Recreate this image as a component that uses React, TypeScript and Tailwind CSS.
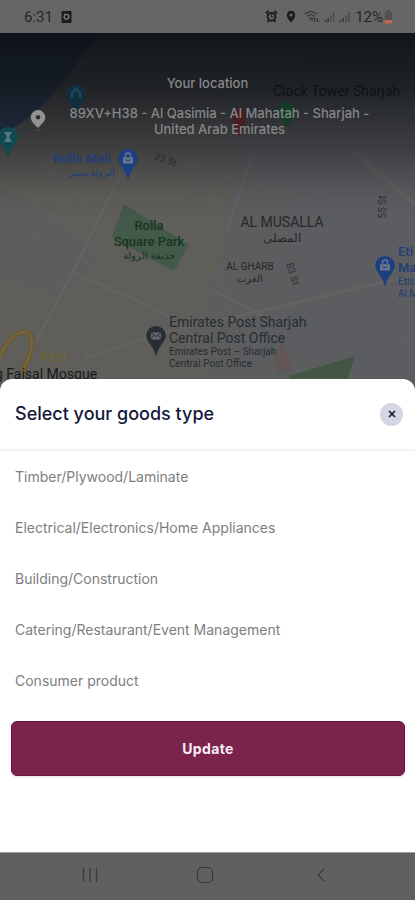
import type { ReactNode } from "react";

const GOODS = [
  "Timber/Plywood/Laminate",
  "Electrical/Electronics/Home Appliances",
  "Building/Construction",
  "Catering/Restaurant/Event Management",
  "Consumer product",
];

function StatusBar() {
  return (
    <header className="flex h-[33px] items-center justify-between bg-[#666666] pr-[22px] pl-6 font-['Roboto',sans-serif] text-[#262626]">
      <div className="flex items-center gap-2">
        <span className="text-[15px] leading-5">6:31</span>
        <svg width="11" height="12" viewBox="0 0 11 12" aria-hidden="true">
          <rect x="0.5" width="10" height="12" rx="1" fill="#1c1c1c" />
          <circle cx="5.5" cy="5.8" r="2.4" fill="none" stroke="#808080" strokeWidth="1.3" />
          <path d="M3.2 3.2h1.6" stroke="#808080" />
        </svg>
      </div>
      <div className="flex items-center gap-1">
        <svg width="13" height="13" viewBox="0 0 13 13" aria-hidden="true">
          <path d="M1 3.5L3.6 1M12 3.5L9.4 1M2.6 11.8l1.2-1.4M10.4 11.8L9.2 10.4" stroke="#1f1f1f" strokeWidth="2" />
          <circle cx="6.5" cy="6.8" r="3.9" fill="none" stroke="#1f1f1f" strokeWidth="2" />
          <path d="M6.5 4.5v2.5h2" fill="none" stroke="#1f1f1f" />
        </svg>
        <svg className="mx-1" width="10" height="13" viewBox="0 0 10 13" aria-hidden="true">
          <path
            fillRule="evenodd"
            fill="#1c1c1c"
            d="M5 .8A4.2 4.2 0 0 0 .8 5c0 3 4.2 7.5 4.2 7.5S9.2 8 9.2 5A4.2 4.2 0 0 0 5 .8zm0 2.600a1.700 1.700 0 1 1 0 3.400 1.700 1.700 0 0 1 0-3.400z"
          />
        </svg>
        <svg width="16" height="13" viewBox="0 0 16 13" aria-hidden="true">
          <g fill="none" stroke="#353535" strokeWidth="1.2">
            <path d="M1 4.2Q7 -.8 13 4.2M3 6.5Q7 3 11 6.5M5 8.7Q7 7 9 8.7" />
            <path d="M5.5 8.5L9 11.5M9 9.5l1.5-1.5L12 9.5M10.5 12V8.2M13.5 8v3.8M12 10.5l1.5 1.5L15 10.5" strokeWidth="1" />
          </g>
        </svg>
        <svg width="11" height="13" viewBox="0 0 11 13" aria-hidden="true">
          <path d="M1.5 12V10M4.2 12V8" stroke="#333" strokeWidth="1.5" />
          <path d="M7 12V5M9.7 12V2" stroke="#4a4a4a" strokeWidth="1.4" />
        </svg>
        <svg width="12" height="13" viewBox="0 0 12 13" aria-hidden="true">
          <path d="M1.5 12V10M4.2 12V8" stroke="#333" strokeWidth="1.5" />
          <path d="M7 12V5M10 12V2" stroke="#4a4a4a" strokeWidth="1.6" />
        </svg>
        <div className="flex items-center gap-px">
          <span className="text-[15px] leading-5">12%</span>
          <svg width="9" height="14" viewBox="0 0 9 14" aria-hidden="true">
            <path d="M3 0h3v1.5h2V10H.8V1.5H3z" fill="#505050" />
            <path d="M.8 10H8V13.5H.8z" fill="#c0674f" />
          </svg>
        </div>
      </div>
    </header>
  );
}

function MapPin({ color, children }: { color: string; children?: ReactNode }) {
  return (
    <svg width="22" height="32" viewBox="0 0 22 32" aria-hidden="true">
      <path
        d="M11 1A9.8 9.8 0 0 0 1.2 10.8C1.2 16.5 7.5 20 9.8 28q.3 2.5 1.2 2.5t1.2-2.5c2.3-8 8.6-11.5 8.6-17.2A9.8 9.8 0 0 0 11 1z"
        fill={color}
      />
      {children}
    </svg>
  );
}

function Bag() {
  return (
    <g>
      <path d="M6 9.2h10v6.3H6z" fill="#66758f" />
      <path d="M8.5 9V7.5a2.5 2.5 0 0 1 5 0V9" fill="none" stroke="#66758f" strokeWidth="1.5" />
      <path d="M8.8 11.5q2.2 2.8 4.4 0" fill="none" stroke="#223f78" />
    </g>
  );
}

function MapDrawing() {
  return (
    <svg
      className="absolute inset-0 size-full"
      viewBox="0 0 415 360"
      preserveAspectRatio="xMidYMin slice"
      aria-hidden="true"
    >
      <defs>
        <linearGradient id="land" x1="0" x2="1">
          <stop offset="0" stopColor="#5f5e5a" />
          <stop offset="0.45" stopColor="#5f5e5a" />
          <stop offset="0.6" stopColor="#5c5d5f" />
          <stop offset="1" stopColor="#5b5d60" />
        </linearGradient>
        <linearGradient id="shade" x1="0" x2="0" y1="0" y2="1">
          <stop offset="0" stopColor="#0d1117" stopOpacity="0.94" />
          <stop offset="0.15" stopColor="#13161b" stopOpacity="0.84" />
          <stop offset="0.32" stopColor="#1d1f23" stopOpacity="0.5" />
          <stop offset="0.46" stopColor="#2b2c2f" stopOpacity="0.08" />
          <stop offset="0.52" stopColor="#2b2c2f" stopOpacity="0" />
        </linearGradient>
      </defs>
      <rect width="415" height="360" fill="url(#land)" />
      <path d="M0 0H100L60 52Q38 82 0 103z" fill="#1f3858" />
      <path d="M0 155Q50 180 100 225L60 265 0 240z" fill="#595c61" opacity="0.5" />
      <path d="M207 145l25 10-18 85-7 0z" fill="#625f54" opacity="0.5" />
      <g fill="none" stroke="#636362" strokeWidth="3">
        <path d="M128 125L75 235 35 310" />
        <path d="M75 240l85 38 40 30" />
        <path d="M85 325l60-20 265-62" />
        <path d="M258 108L225 200" strokeWidth="2" />
        <path d="M350 115L415 172" strokeWidth="4" />
        <path d="M215 258l48 25" />
      </g>
      <g fill="none" stroke="#626363" strokeWidth="1">
        <path d="M128 60L180 130 320 170M0 180l120 70M335 165v65l50 4V165zM250 205l80 10M10 225l60-60M70 300l100-35M180 250l25 90M310 258l36 90M415 290l-45 70M0 270L85 245" />
        <path d="M40 130l80 70M20 155l80 70M200 180l40 130M350 250l65 70M85 305v45M130 285v55" />
      </g>
      <path d="M124 171l65 41-15 26q-30-14-62-35z" fill="#435949" />
      <path d="M289 343l66-20-12 37h-54z" fill="#435646" />
      <path d="M283 311l10 25-15 4-5-20z" fill="#645451" opacity="0.7" />
      <path d="M0 325C8 300 30 290 32 308c1 14-8 23-10 34" fill="none" stroke="#6b5a2f" strokeWidth="5" />
      <path d="M0 325C8 300 30 290 32 308c1 14-8 23-10 34" fill="none" stroke="#746740" strokeWidth="2" />
      <rect width="415" height="360" fill="url(#shade)" />
      <path d="M287 68q-9 3-9 11l9 15 9-15q0-8-9-11z" fill="#123d24" />
      <path d="M239 74q-9 5-7 14l7 16 7-16q1-9-7-14z" fill="#481f21" />
    </svg>
  );
}

function MapView() {
  return (
    <section aria-label="Map" className="relative -mb-3 h-[358px] overflow-hidden font-['Roboto',sans-serif]">
      <MapDrawing />

      <div className="absolute top-[51px] left-[65px]">
        <MapPin color="#112f40">
          <path d="M7 14V9l4-4 4 4v5" fill="none" stroke="#244856" strokeWidth="2" />
        </MapPin>
      </div>
      <div className="absolute top-[93px] -left-[3px]">
        <MapPin color="#0e4a50">
          <path d="M7 6h8l-3 5 3 5H7l3-5z" fill="#59777b" />
        </MapPin>
      </div>
      <p className="absolute top-[50px] left-[273px] text-[14px] leading-4 whitespace-nowrap text-[#0b1318]">
        Clock Tower Sharjah
      </p>

      <div className="absolute top-[118px] left-[53px] w-[62px] whitespace-nowrap text-[#1e3d7a]">
        <p className="text-[13px] leading-4 font-medium">Rolla Mall</p>
        <p dir="rtl" lang="ar" className="text-right text-[10px] leading-3">
          الرولة سنتر
        </p>
      </div>
      <div className="absolute top-[115px] left-[117px]">
        <MapPin color="#1c3f80">
          <Bag />
        </MapPin>
      </div>
      <p className="absolute top-[121px] left-[154px] rotate-[18deg] text-[10px] leading-3 text-[#2b2b2b]">25 St</p>

      <div className="absolute top-[185px] left-[109px] w-20 text-center whitespace-nowrap text-[#17351f]">
        <p className="text-[13px] leading-4 font-medium">Rolla</p>
        <p className="text-[13px] leading-4 font-medium">Square Park</p>
        <p lang="ar" dir="rtl" className="text-[10px] leading-3">
          حديقة الرولة
        </p>
      </div>

      <div className="absolute top-[181px] left-[232px] w-[100px] text-center text-[#262729]">
        <p className="text-[14px] leading-4 whitespace-nowrap">AL MUSALLA</p>
        <p lang="ar" dir="rtl" className="text-[12px] leading-4">
          المصلى
        </p>
      </div>
      <p className="absolute top-[168px] left-[372px] -rotate-90 text-[10px] leading-3 text-[#303132]">55 St</p>

      <div className="absolute top-[228px] left-[222px] w-[56px] text-center text-[#262729]">
        <p className="text-[10px] leading-3 whitespace-nowrap">AL GHARB</p>
        <p lang="ar" dir="rtl" className="text-[10px] leading-3">
          الغرب
        </p>
      </div>
      <p className="absolute top-[235px] left-[281px] rotate-[72deg] text-[10px] leading-3 text-[#303132]">83 St</p>

      <div className="absolute top-[222px] left-[374px]">
        <MapPin color="#1c3f80">
          <Bag />
        </MapPin>
      </div>
      <div className="absolute top-[211px] left-[398px] whitespace-nowrap text-[#1e3d7a]">
        <p className="text-[13px] leading-4 font-medium">Eti</p>
        <p className="text-[13px] leading-4 font-medium">Ma</p>
        <p className="text-[10px] leading-3">Etis</p>
        <p className="text-[10px] leading-3">Al M</p>
      </div>

      <div className="absolute top-[292px] left-[145px]">
        <MapPin color="#272e36">
          <path d="M6 7.5h10v7H6z" fill="#666b70" />
          <path d="M6 8l5 3.5L16 8M6 14l3-3.5M16 14l-3-3.5" fill="none" stroke="#272e36" />
        </MapPin>
      </div>
      <div className="absolute top-[281px] left-[169px] whitespace-nowrap text-[#262d33]">
        <p className="text-[14px] leading-4">Emirates Post Sharjah</p>
        <p className="text-[14px] leading-4">Central Post Office</p>
        <p className="text-[10px] leading-3">Emirates Post – Sharjah</p>
        <p className="text-[10px] leading-3">Central Post Office</p>
      </div>
      <p className="absolute top-[319px] left-[40px] rotate-3 text-[11px] leading-3 text-[#6f6d1c]">D118</p>
      <p className="absolute top-[333px] -left-[5px] text-[14px] leading-4 whitespace-nowrap text-[#181b1d]">
        g Faisal Mosque
      </p>

      <div className="relative pt-[42px] text-center font-['Inter',sans-serif] text-[13px] leading-4 font-medium text-[#868788]">
        <h1>Your location</h1>
        <div className="mt-[14px] flex items-start pr-6 pl-7">
          <svg className="mt-1 shrink-0" width="20" height="22" viewBox="0 0 20 22" aria-hidden="true">
            <path
              fillRule="evenodd"
              fill="#929292"
              d="M10 1a7.3 7.3 0 0 0-7.3 7.3C2.7 12.5 7 16 10 19c3-3 7.3-6.5 7.3-10.7A7.3 7.3 0 0 0 10 1zm0 5a2.3 2.3 0 1 1 0 4.6A2.3 2.3 0 0 1 10 6z"
            />
            <path d="M7 21h6" stroke="#505050" />
          </svg>
          <p className="flex-1">
            89XV+H38 - Al Qasimia - Al Mahatah - Sharjah -<br />
            United Arab Emirates
          </p>
        </div>
      </div>
    </section>
  );
}

function GoodsSheet() {
  return (
    <main className="relative flex flex-1 flex-col rounded-t-xl bg-white font-['Inter',sans-serif]">
      <div className="flex h-[72px] items-center justify-between border-b-2 border-[#f3f3f4] pr-3 pl-[15px]">
        <h2 className="text-[18px] leading-6 font-medium text-[#14193a]">Select your goods type</h2>
        <button
          type="button"
          aria-label="Close"
          className="flex size-[23px] items-center justify-center rounded-full bg-[#d5d6e3]"
        >
          <svg width="8" height="8" viewBox="0 0 8 8" aria-hidden="true">
            <path d="M1 1l6 6M7 1L1 7" stroke="#14193a" strokeWidth="1.7" />
          </svg>
        </button>
      </div>
      <ul>
        {GOODS.map((name) => (
          <li key={name}>
            <button
              type="button"
              className="flex h-[51px] w-full items-center px-[15px] text-left text-[14px] leading-5 text-[#7d7e82]"
            >
              {name}
            </button>
          </li>
        ))}
      </ul>
      <div className="pt-[15px] pr-[10px] pb-6 pl-[11px]">
        <button
          type="button"
          className="h-[55px] w-full rounded-md border border-[#6b143e] bg-[#7a234c] text-[14px] leading-5 font-bold tracking-wide text-[#f6edf2] shadow-sm"
        >
          Update
        </button>
      </div>
    </main>
  );
}

function NavigationBar() {
  return (
    <nav
      aria-label="System"
      className="flex h-12 items-center justify-around border-t border-[#a0a0a0] bg-[#606060] pr-9 pb-1 pl-8 text-[#3b3b3b]"
    >
      <button type="button" aria-label="Recent apps">
        <svg width="18" height="18" viewBox="0 0 18 18" fill="none" stroke="currentColor" aria-hidden="true">
          <path d="M2.5 2v14M9 2v14M15.5 2v14" strokeWidth="1.3" />
        </svg>
      </button>
      <button type="button" aria-label="Home">
        <svg width="18" height="18" viewBox="0 0 18 18" fill="none" stroke="currentColor" aria-hidden="true">
          <rect x="1.5" y="1.5" width="15" height="15" rx="4.5" strokeWidth="1.2" />
        </svg>
      </button>
      <button type="button" aria-label="Back">
        <svg width="18" height="18" viewBox="0 0 18 18" fill="none" stroke="currentColor" aria-hidden="true">
          <path d="M12 3L6 9l6 6" strokeWidth="1.3" />
        </svg>
      </button>
    </nav>
  );
}

export default function App() {
  return (
    <div className="flex min-h-screen flex-col bg-[#606060]">
      <StatusBar />
      <MapView />
      <GoodsSheet />
      <NavigationBar />
    </div>
  );
}
